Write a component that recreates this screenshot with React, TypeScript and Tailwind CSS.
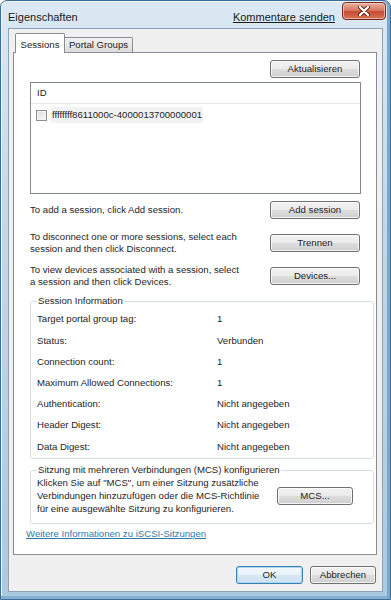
import React from 'react';

const btn =
  'h-[18px] rounded-[3px] border border-[#707070] bg-[linear-gradient(to_bottom,#f2f2f2_0%,#ebebeb_48%,#dddddd_52%,#cfcfcf_100%)] shadow-[inset_0_0_0_1px_rgba(255,255,255,0.75)] text-[#1e1e1e] leading-none';

const Button: React.FC<{ label: string; className?: string }> = ({ label, className }) => (
  <button className={btn + ' ' + (className ?? 'w-[90px]')}>{label}</button>
);

const sessionInfo = [
  ['Target portal group tag:', '1'],
  ['Status:', 'Verbunden'],
  ['Connection count:', '1'],
  ['Maximum Allowed Connections:', '1'],
  ['Authentication:', 'Nicht angegeben'],
  ['Header Digest:', 'Nicht angegeben'],
  ['Data Digest:', 'Nicht angegeben'],
];

const CloseIcon = () => (
  <svg width="12" height="10" viewBox="0 0 12 10">
    <path d="M2 1 L10 9 M10 1 L2 9" stroke="#5a1a10" strokeWidth="4" strokeLinecap="round" />
    <path d="M2 1 L10 9 M10 1 L2 9" stroke="#ffffff" strokeWidth="2.4" strokeLinecap="round" />
  </svg>
);

const App: React.FC = () => {
  return (
    <div className="w-[391px] h-[600px] overflow-hidden font-['Liberation_Sans',Arial,sans-serif] text-[9.6px] text-[#1e1e1e]">
      <div className="h-full flex flex-col rounded-t-[7px] border border-[#3b6d96] bg-[linear-gradient(to_bottom,#dbe9f4_0%,#c3d9ea_35%,#abc9e0_100%)] shadow-[inset_-3px_0_0_#7aa8cc,inset_0_-3px_0_#86b0d0,inset_1px_1px_0_#eef5fb]">
        {/* title bar */}
        <div className="h-[27px] flex items-start pl-[7px] pr-[4px]">
          <span className="mt-[8px] flex-1 text-[11px] text-[#1a1a1a]">Eigenschaften</span>
          <span className="mt-[8px] mr-[7px] text-[11px] text-[#1a1a1a] underline">Kommentare senden</span>
          <div className="mt-[1px] w-[44px] h-[18px] flex items-center justify-center rounded-[4px] border border-[#6e2a20] bg-[linear-gradient(to_bottom,#eab1a2_0%,#d97b63_45%,#c54a30_55%,#d7765b_100%)] shadow-[inset_0_0_0_1px_rgba(255,220,210,0.6)]">
            <CloseIcon />
          </div>
        </div>

        {/* dialog body */}
        <div className="flex-1 mx-[7px] mb-[7px] flex flex-col border border-[#8ba4b9] bg-[#f0f0f0]">
          {/* tabs */}
          <div className="mt-[4px] pl-[6px] flex items-end">
            <div className="relative z-10 -mb-px h-[20px] w-[50px] flex items-start justify-center pt-[4px] border border-b-0 border-[#898c95] rounded-t-[2px] bg-white">
              Sessions
            </div>
            <div className="h-[15px] w-[68px] flex items-center justify-center border border-l-0 border-b-0 border-[#898c95] rounded-tr-[2px] bg-[linear-gradient(to_bottom,#f3f3f3,#dcdcdc)]">
              Portal Groups
            </div>
          </div>

          {/* tab panel */}
          <div className="flex-1 ml-[4px] mr-[5px] flex flex-col border border-[#898c95] bg-white pl-[16px] pr-[2px]">
            <div className="mt-[7px] pr-[14px] flex justify-end">
              <Button label="Aktualisieren" />
            </div>

            <div className="mt-[4px] mr-[13px] h-[112px] border border-[#828790] bg-white">
              <div className="h-[21px] flex items-center pl-[6px] border-b border-[#e5e5e5]">ID</div>
              <div className="mt-[3px] h-[16px] flex items-center pl-[5px]">
                <span className="w-[11px] h-[11px] border border-[#8f8f8f] bg-[linear-gradient(135deg,#dcdcdc,#fafafa)] shadow-[inset_0_0_0_1px_#f4f4f4]" />
                <span className="ml-[4px] h-[16px] px-[1px] flex items-center bg-[#f2f2f2]">
                  ffffffff8611000c-4000013700000001
                </span>
              </div>
            </div>

            <div className="mt-[7px] pr-[14px] flex items-center justify-between">
              <span>To add a session, click Add session.</span>
              <Button label="Add session" />
            </div>

            <div className="mt-[12px] pr-[14px] flex items-center justify-between">
              <span className="leading-[11.5px]">
                To disconnect one or more sessions, select each
                <br />
                session and then click Disconnect.
              </span>
              <Button label="Trennen" />
            </div>

            <div className="mt-[10px] pr-[14px] flex items-center justify-between">
              <span className="leading-[11.5px]">
                To view devices associated with a session, select
                <br />
                a session and then click Devices.
              </span>
              <Button label="Devices..." />
            </div>

            <fieldset className="mt-[8px] border border-[#d5dfe5] rounded-[3px] pl-[6px] pb-[1px]">
              <legend className="px-[1px] leading-[12px]">Session Information</legend>
              <div className="mt-[2px] grid grid-cols-[180px_1fr]">
                {sessionInfo.map(([k, v]) => (
                  <React.Fragment key={k}>
                    <div className="h-[21.2px] flex items-center">{k}</div>
                    <div className="h-[21.2px] flex items-center">{v}</div>
                  </React.Fragment>
                ))}
              </div>
            </fieldset>

            <fieldset className="mt-[5px] border border-[#d5dfe5] rounded-[3px] pl-[6px] pb-[8px] pr-[20px]">
              <legend className="px-[1px] leading-[12px]">Sitzung mit mehreren Verbindungen (MCS) konfigurieren</legend>
              <div className="flex items-center justify-between">
                <span className="leading-[13px]">
                  Klicken Sie auf "MCS", um einer Sitzung zusätzliche
                  <br />
                  Verbindungen hinzuzufügen oder die MCS-Richtlinie
                  <br />
                  für eine ausgewählte Sitzung zu konfigurieren.
                </span>
                <Button label="MCS..." className="w-[76px]" />
              </div>
            </fieldset>

            <a className="mt-[4px] -ml-[4px] w-fit leading-[12px] text-[#2f79ad] underline">
              Weitere Informationen zu iSCSI-Sitzungen
            </a>
          </div>

          {/* footer buttons */}
          <div className="h-[36px] pt-[4px] flex items-center justify-end gap-[7px] pr-[6px]">
            <button className="h-[18px] w-[67px] rounded-[3px] border border-[#3c7fb1] bg-[linear-gradient(to_bottom,#f4f9fd_0%,#e6f1f9_48%,#d6e7f4_52%,#cfe2f1_100%)] shadow-[inset_0_0_0_1px_#a9d6f3] leading-none">
              OK
            </button>
            <Button label="Abbrechen" className="w-[66px]" />
          </div>
        </div>
      </div>
    </div>
  );
};

export default App;
